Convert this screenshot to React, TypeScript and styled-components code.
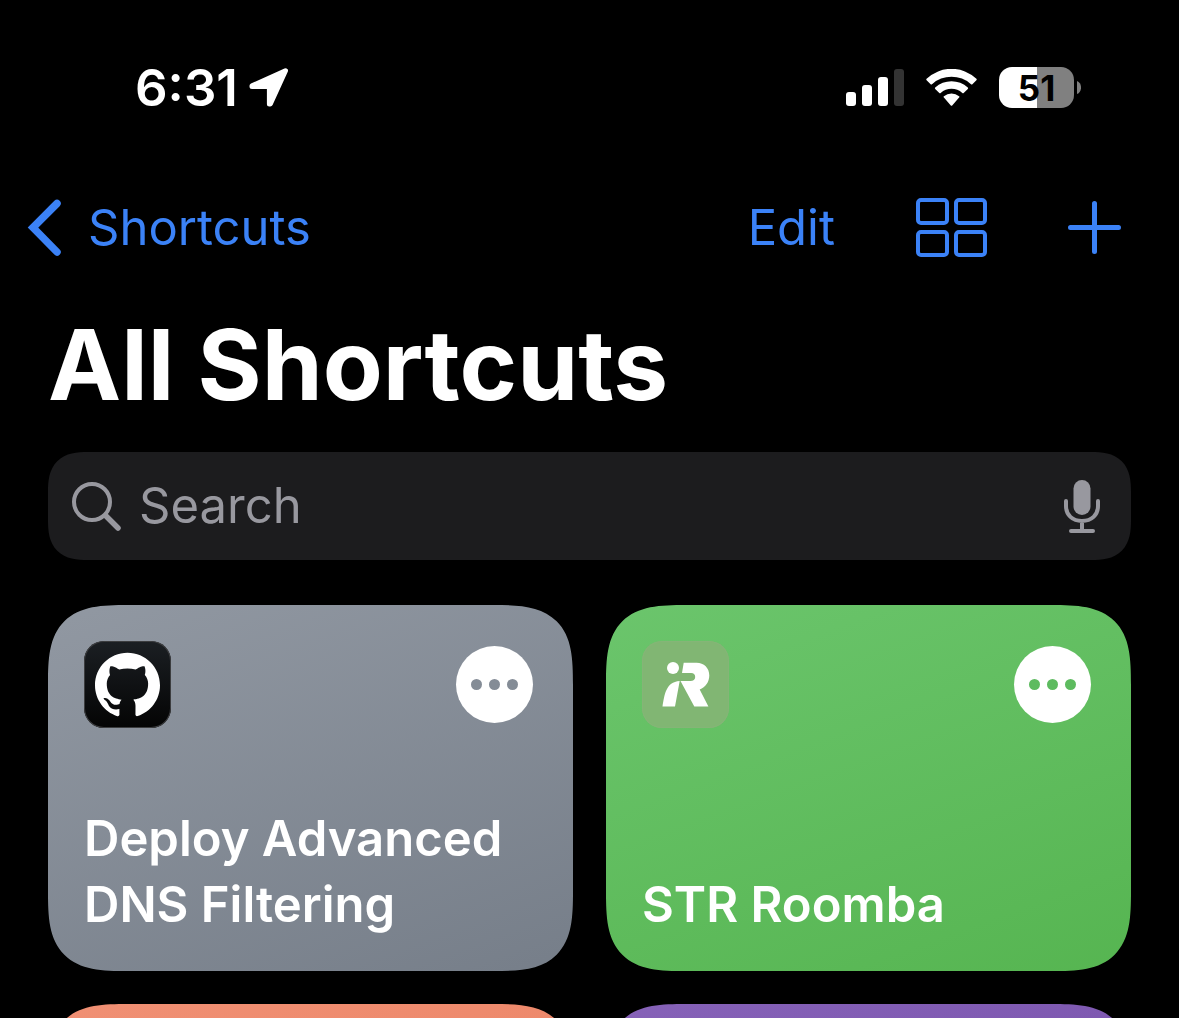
import React from "react";
import styled, { createGlobalStyle } from "styled-components";
import { SiGithub } from "react-icons/si";

const BLUE = "#3b82f7";
const GRAY = "#98989f";

const GlobalStyle = createGlobalStyle`
  *, *::before, *::after { box-sizing: border-box; }
  body {
    margin: 0;
    background: #000;
    color: #fff;
    font-family: Inter, "Liberation Sans", sans-serif;
  }
  button, input { font: inherit; color: inherit; }
  svg { display: block; flex: none; }
`;

const Screen = styled.div`
  height: 100vh;
  display: flex;
  flex-direction: column;
  overflow: hidden;
`;

const StatusBar = styled.header`
  display: flex;
  align-items: center;
  justify-content: space-between;
  height: 175px;
  padding: 0 98px 0 135px;
`;

const StatusGroup = styled.div<{ $gap: number }>`
  display: flex;
  align-items: center;
  gap: ${(p) => p.$gap}px;
`;

const Clock = styled.time`
  font-size: 51px;
  line-height: 60px;
  font-weight: 600;
`;

const Battery = styled.div`
  display: flex;
  align-items: center;
  gap: 3px;
`;

const BatteryBody = styled.div<{ $level: number }>`
  width: 75px;
  height: 41px;
  border-radius: 13px;
  background: linear-gradient(to right, #fff ${(p) => p.$level}%, #808080 ${(p) => p.$level}%);
  color: #000;
  font-size: 35px;
  line-height: 42px;
  font-weight: 700;
  text-align: center;
`;

const NavBar = styled.nav`
  display: flex;
  align-items: center;
  justify-content: space-between;
  height: 105px;
  padding: 0 58px 0 27px;
  color: ${BLUE};
`;

const NavActions = styled.div`
  display: flex;
  align-items: center;
  gap: 81px;
`;

const NavButton = styled.button`
  display: flex;
  align-items: center;
  gap: 26px;
  padding: 0;
  border: 0;
  background: none;
  font-size: 49px;
  line-height: 60px;
  cursor: pointer;
`;

const Content = styled.main`
  display: flex;
  flex: 1;
  flex-direction: column;
  min-height: 0;
  padding: 25px 48px 0;
  overflow-y: auto;
  scrollbar-width: none;
`;

const Title = styled.h1`
  margin: 0;
  font-size: 98px;
  line-height: 120px;
  font-weight: 700;
`;

const SearchField = styled.label`
  display: flex;
  flex: none;
  align-items: center;
  gap: 18px;
  height: 108px;
  margin-top: 27px;
  padding: 0 30px 0 23px;
  border-radius: 32px;
  background: #1c1c1e;
  color: ${GRAY};

  @supports (corner-shape: superellipse(1.4)) {
    border-radius: 40px;
    corner-shape: superellipse(1.4);
  }
`;

const SearchInput = styled.input`
  flex: 1;
  min-width: 0;
  padding: 0;
  border: 0;
  outline: 0;
  background: none;
  font-size: 49px;
  line-height: 60px;

  &::placeholder { color: ${GRAY}; opacity: 1; }
`;

const IconButton = styled.button`
  padding: 0;
  border: 0;
  background: none;
  cursor: pointer;
`;

const Grid = styled.section`
  display: grid;
  grid-template-columns: 1fr 1fr;
  gap: 33px;
  margin-top: 45px;
`;

const Card = styled.article<{ $from: string; $to: string }>`
  display: flex;
  flex-direction: column;
  justify-content: space-between;
  height: 366px;
  padding: 36px 36px 33px;
  border-radius: 60px;
  background: linear-gradient(160deg, ${(p) => p.$from}, ${(p) => p.$to});

  @supports (corner-shape: superellipse(1.6)) {
    border-radius: 80px;
    corner-shape: superellipse(1.6);
  }
`;

const CardTop = styled.div`
  display: flex;
  align-items: center;
  justify-content: space-between;
  padding-right: 4px;
`;

const AppTile = styled.div<{ $bg: string; $edge: string }>`
  display: flex;
  align-items: center;
  justify-content: center;
  width: 87px;
  height: 87px;
  border-radius: 20px;
  background: ${(p) => p.$bg};
  box-shadow: inset 0 0 0 1px ${(p) => p.$edge};
`;

const MoreButton = styled.button<{ $dot: string }>`
  display: flex;
  align-items: center;
  justify-content: center;
  gap: 7px;
  width: 77px;
  height: 77px;
  padding: 0;
  border: 0;
  border-radius: 50%;
  background: #fff;
  color: ${(p) => p.$dot};
  cursor: pointer;
`;

const Dot = styled.span`
  width: 11px;
  height: 11px;
  border-radius: 50%;
  background: currentColor;
`;

const CardTitle = styled.h2`
  margin: 0;
  font-size: 49px;
  line-height: 66px;
  font-weight: 600;
`;

const LocationArrow = () => (
  <svg width="40" height="39" viewBox="0 0 40 39" aria-hidden="true">
    <path d="M36.5 2.8 3 17.8v.7h17.4V36h.9Z" fill="#fff" stroke="#fff" strokeWidth="5" strokeLinejoin="round" />
  </svg>
);

const Signal = () => (
  <svg width="58" height="37" viewBox="0 0 58 37" fill="#fff" aria-hidden="true">
    <rect x="0" y="23" width="10" height="14" rx="3" />
    <rect x="16" y="16" width="10" height="21" rx="3" />
    <rect x="32" y="8" width="10" height="29" rx="3" />
    <rect x="48" y="0" width="10" height="37" rx="3" fill="#333" />
  </svg>
);

const Wifi = () => (
  <svg width="51" height="37" viewBox="0 0 51 37" fill="#fff" aria-hidden="true">
    <path d="M.6 11.2a1 1 0 0 1 0-1.4 36 36 0 0 1 49.8 0 1 1 0 0 1 0 1.4l-4 4a1 1 0 0 1-1.4 0 29 29 0 0 0-39 0 1 1 0 0 1-1.4 0Z" />
    <path d="M9.2 19.9a1 1 0 0 1 0-1.4 24.3 24.3 0 0 1 32.6 0 1 1 0 0 1 0 1.4l-4.1 4a1 1 0 0 1-1.4 0 16.5 16.5 0 0 0-21.6 0 1 1 0 0 1-1.4 0Z" />
    <path d="M17.9 28.6a1 1 0 0 1 0-1.4 12 12 0 0 1 15.2 0 1 1 0 0 1 0 1.4l-6.9 7.8a1 1 0 0 1-1.4 0Z" />
  </svg>
);

const BatteryCap = () => (
  <svg width="4" height="13" viewBox="0 0 4 13" aria-hidden="true">
    <path d="M0 0C5.4 2 5.4 11 0 13Z" fill="#808080" />
  </svg>
);

const Chevron = () => (
  <svg width="35" height="58" viewBox="0 0 35 58" aria-hidden="true">
    <path d="M30 4.5 6 28.500l24 24.500" fill="none" stroke="currentColor" strokeWidth="7.5" strokeLinecap="round" strokeLinejoin="miter" />
  </svg>
);

const GridIcon = () => (
  <svg width="71" height="59" viewBox="0 0 71 59" fill="none" stroke="currentColor" strokeWidth="4" aria-hidden="true">
    <rect x="2" y="2" width="29" height="23" rx="3" />
    <rect x="40" y="2" width="29" height="23" rx="3" />
    <rect x="2" y="34" width="29" height="23" rx="3" />
    <rect x="40" y="34" width="29" height="23" rx="3" />
  </svg>
);

const PlusIcon = () => (
  <svg width="53" height="53" viewBox="0 0 53 53" stroke="currentColor" strokeWidth="5" strokeLinecap="round" aria-hidden="true">
    <path d="M26.5 2.5v48M2.5 26.5h48" />
  </svg>
);

const SearchIcon = () => (
  <svg width="50" height="50" viewBox="0 0 50 50" fill="none" stroke="currentColor" strokeLinecap="round" aria-hidden="true">
    <circle cx="21" cy="21" r="18" strokeWidth="4" />
    <path d="M35 35 47 47" strokeWidth="5.5" />
  </svg>
);

const MicIcon = () => (
  <svg width="38" height="54" viewBox="0 -1 38 54" fill="none" stroke="currentColor" strokeWidth="4" strokeLinecap="round" aria-hidden="true">
    <rect x="10.5" y="0" width="17" height="35" rx="8.5" fill="currentColor" stroke="none" />
    <path d="M3 21v5c0 9 6.500 15 16 15s16-6 16-15v-5M19 41v9M8 51h22" />
  </svg>
);

const RobotLogo = () => (
  <svg width="87" height="87" viewBox="0 0 87 87" fill="#fff" aria-hidden="true">
    <circle cx="31" cy="27" r="6" />
    <path d="M41.7 21.7H54.5C62 21.7 67.3 27 67.3 34.4C67.3 40.9 63.5 45.900 57.700 48.400L66.400 65.400H52.300L38.500 40H48.500C51.200 40 53.200 38.500 53.200 35.900C53.200 33.600 51.500 32 49.200 32H40Z" />
    <path d="M20.5 65.4C22.500 54.400 23.500 40.900 37.700 40L33 65.400Z" />
  </svg>
);

interface Shortcut {
  name: string;
  from: string;
  to: string;
  dot: string;
  tile?: { bg: string; edge: string; logo: React.ReactNode };
}

const shortcuts: Shortcut[] = [
  {
    name: "Deploy Advanced DNS Filtering",
    from: "#9198a2",
    to: "#767e89",
    dot: "#848c96",
    tile: {
      bg: "linear-gradient(#1b1f23, #040404)",
      edge: "#3c3d3f",
      logo: <SiGithub size={65} color="#fff" aria-hidden="true" />,
    },
  },
  {
    name: "STR Roomba",
    from: "#6bc56c",
    to: "#56b551",
    dot: "#5dbb5f",
    tile: { bg: "#81b673", edge: "#85b577", logo: <RobotLogo /> },
  },
  { name: "", from: "#f09074", to: "#e97c5c", dot: "#ec8668" },
  { name: "", from: "#8662b8", to: "#7048a4", dot: "#7b55ae" },
];

const ShortcutCard = ({ item }: { item: Shortcut }) => (
  <Card $from={item.from} $to={item.to}>
    {item.tile && (
      <>
        <CardTop>
          <AppTile $bg={item.tile.bg} $edge={item.tile.edge}>{item.tile.logo}</AppTile>
          <MoreButton $dot={item.dot} aria-label={`Edit ${item.name}`}>
            <Dot />
            <Dot />
            <Dot />
          </MoreButton>
        </CardTop>
        <CardTitle>{item.name}</CardTitle>
      </>
    )}
  </Card>
);

export default function App() {
  return (
    <Screen>
      <GlobalStyle />
      <StatusBar>
        <StatusGroup $gap={11}>
          <Clock>6:31</Clock>
          <LocationArrow />
        </StatusGroup>
        <StatusGroup $gap={22}>
          <Signal />
          <Wifi />
          <Battery>
            <BatteryBody $level={51}>51</BatteryBody>
            <BatteryCap />
          </Battery>
        </StatusGroup>
      </StatusBar>
      <NavBar>
        <NavButton>
          <Chevron />
          Shortcuts
        </NavButton>
        <NavActions>
          <NavButton>Edit</NavButton>
          <NavButton aria-label="Change view"><GridIcon /></NavButton>
          <NavButton aria-label="New shortcut"><PlusIcon /></NavButton>
        </NavActions>
      </NavBar>
      <Content>
        <Title>All Shortcuts</Title>
        <SearchField>
          <SearchIcon />
          <SearchInput type="text" placeholder="Search" aria-label="Search" />
          <IconButton aria-label="Dictate"><MicIcon /></IconButton>
        </SearchField>
        <Grid>
          {shortcuts.map((item, i) => (
            <ShortcutCard key={i} item={item} />
          ))}
        </Grid>
      </Content>
    </Screen>
  );
}
